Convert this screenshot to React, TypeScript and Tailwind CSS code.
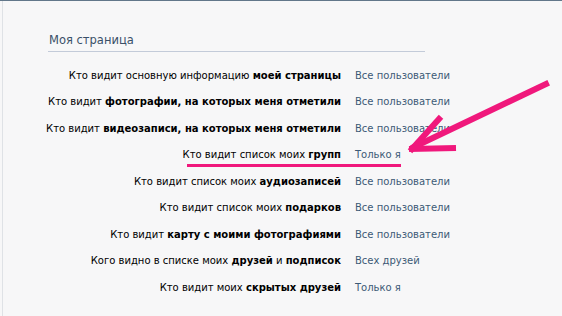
import React from 'react';

type Row = { parts: [string, boolean][]; value: string };

const rows: Row[] = [
  { parts: [['Кто видит основную информацию ', false], ['моей страницы', true]], value: 'Все пользователи' },
  { parts: [['Кто видит ', false], ['фотографии, на которых меня отметили', true]], value: 'Все пользователи' },
  { parts: [['Кто видит ', false], ['видеозаписи, на которых меня отметили', true]], value: 'Все пользователи' },
  { parts: [['Кто видит список моих ', false], ['групп', true]], value: 'Только я' },
  { parts: [['Кто видит список моих ', false], ['аудиозаписей', true]], value: 'Все пользователи' },
  { parts: [['Кто видит список моих ', false], ['подарков', true]], value: 'Все пользователи' },
  { parts: [['Кто видит ', false], ['карту с моими фотографиями', true]], value: 'Все пользователи' },
  { parts: [['Кого видно в списке моих ', false], ['друзей', true], [' и ', false], ['подписок', true]], value: 'Всех друзей' },
  { parts: [['Кто видит моих ', false], ['скрытых друзей', true]], value: 'Только я' },
];

export default function App() {
  return (
    <div className="relative w-[562px] h-[316px] overflow-hidden bg-[#f7f7f8] border-t border-[#62778a] font-['DejaVu_Sans',sans-serif]">
      <div className="ml-[2px] h-full border-l border-[#dfe2e6]">
        {/* section header */}
        <div className="ml-[45px] w-[377px] pt-[32px] pb-[3px] pl-[1px] border-b border-[#c3cbd9] text-[11.5px] leading-[15px] text-[#3a5068]">
          Моя страница
        </div>

        {/* privacy rows */}
        <div className="mt-[10px] flex flex-col">
          {rows.map((r, i) => (
            <div key={i} className="flex h-[26.5px] items-center text-[10px] leading-[13px]">
              <div className="w-[338px] shrink-0 text-right text-black whitespace-nowrap">
                {r.parts.map(([t, b], j) =>
                  b ? <b key={j} className="font-bold">{t}</b> : <span key={j}>{t}</span>
                )}
              </div>
              <div className="ml-[14px] text-[#3c5a76] whitespace-nowrap">{r.value}</div>
            </div>
          ))}
        </div>
      </div>

      {/* pink annotation */}
      <svg className="absolute left-0 top-0 pointer-events-none" width="562" height="316" viewBox="0 0 562 316">
        <line x1="187" y1="164.5" x2="401" y2="164.5" stroke="#f0187c" strokeWidth="3" />
        <g stroke="#f0187c" strokeWidth="6" strokeLinecap="square" fill="none">
          <line x1="546" y1="83" x2="414" y2="146" />
          <line x1="412" y1="148" x2="439" y2="118" />
          <line x1="412" y1="148" x2="453" y2="147" />
        </g>
      </svg>
    </div>
  );
}
